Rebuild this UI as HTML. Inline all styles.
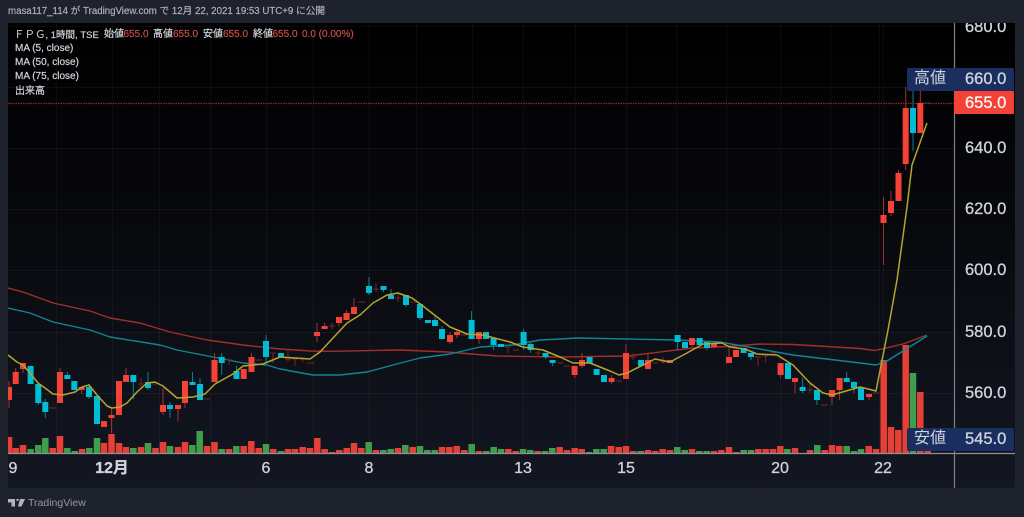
<!DOCTYPE html>
<html lang="ja"><head><meta charset="utf-8"><title>FPG</title>
<style>
html,body{margin:0;padding:0;width:1024px;height:517px;overflow:hidden;background:#1e222d}
#w{position:relative;width:1024px;height:517px;filter:blur(.3px);font-family:"Liberation Sans","Noto Sans CJK JP",sans-serif}
#h{position:absolute;left:8px;top:5px;font-size:9.7px;line-height:14px;color:#b2b5be;white-space:nowrap;-webkit-text-stroke:.15px #b2b5be}
#c{position:absolute;left:8px;top:23px;width:1007px;height:465px;overflow:hidden;background:linear-gradient(180deg,#000 0%,#07080c 40%,#131722 100%)}
#s{position:absolute;left:0;top:0}
.l,.r,.p,.x,.t{position:absolute;white-space:nowrap}
.l{font-size:10px;line-height:14px;color:#d1d4dc;-webkit-text-stroke:.2px #d1d4dc}
.r{font-size:10px;line-height:14px;color:#d0504c;-webkit-text-stroke:.15px #d0504c}
.p{font-size:16.5px;line-height:20px;color:#d1d4dc;left:957px;width:41px;text-align:right;-webkit-text-stroke:.3px #d1d4dc}
.x{font-size:16px;line-height:20px;color:#d1d4dc;transform:translateX(-50%);top:436px;-webkit-text-stroke:.3px #d1d4dc}
.t{font-size:16px;line-height:20px;color:#d1d4dc;left:906px}
.b{position:absolute;background:#1a2f60;border-radius:2px}
</style></head><body><div id="w">
<div id="h">masa117_114 が TradingView.com で 12月 22, 2021 19:53 UTC+9 に公開</div>
<div id="c">
<svg id="s" width="1024" height="517" viewBox="8 23 1024 517" fill="none">
<g stroke="#fff" stroke-opacity=".045" stroke-width="1"><path d="M8 26.500H954M8 87.500H954M8 148.500H954M8 209.500H954M8 270.500H954M8 332.500H954M8 393.500H954"/>
<path d="M56.500 23V454M112.500 23V454M159.500 23V454M210.500 23V454M266.500 23V454M313.500 23V454M369.500 23V454M416.500 23V454M472.500 23V454M523.500 23V454M575.500 23V454M626.500 23V454M676.500 23V454M726.500 23V454M780.500 23V454M830.500 23V454M879.500 23V454M883.500 23V454"/></g>
<path d="M8 103.500H954" stroke="#8f2826" stroke-width="1.200" stroke-dasharray="1.500 1"/>
<!-- volume -->
<path stroke="#e53f36" stroke-width="6.500" d="M9 437V453M15.700 448V453M23 445V453M52.700 448V453M60 436V453M82 449V453M104 443V453M111.500 434V453M119 443V453M126 447V453M141 447V453M155.500 448V453M163 442V453M178 447V453M185 442V453M207 446V453M214.500 442V453M229 449V453M243.700 446V453M251.300 441V453M258.700 448V453M273.300 449V453M288 449V453M295 449V453M302.700 447V453M310 448V453M317.300 438V453M324.700 449V453M332 452V453M339.300 450V453M346.700 448V453M354 443V453M361.300 448V453M376 450V453M398 448V453M412.700 447V453M442 447V453M449.300 447V453M456.700 446V453M464.300 450V453M479 451V453M508.300 449V453M515.700 451V453M537.700 451V453M559.700 447V453M567 450V453M574.700 448V453M581.700 449V453M611 446V453M618.700 447V453M626 446V453M633.300 451V453M648 450V453M655.300 451V453M662.700 449V453M670 450V453M692 449V453M714 451V453M721.300 450V453M729 447V453M736.300 452V453M758.300 449V453M765.700 449V453M773 449V453M780.300 446V453M795 448V453M810 450V453M824.700 450V453M832 445V453M839.300 446V453M868.700 446V453M876 449V453M883.700 360V453M891 427V453M898.300 430V453M905.700 345V453M920.300 392V453M927.700 451V453"/>
<path stroke="#3f9e4c" stroke-width="6.500" d="M30.700 449V453M38.300 445V453M45.300 438V453M67.300 448V453M74.700 451V453M89.300 448V453M97 438V453M133.300 448V453M148 443V453M170 446V453M192.300 445V453M199.700 431V453M221.700 449V453M236.300 446V453M266 444V453M281 451V453M368.700 442V453M383.300 450V453M390.700 449V453M405.300 445V453M420 446V453M427.300 450V453M434.700 450V453M471.700 444V453M486.300 451V453M493.700 447V453M501 449V453M523 449V453M530.300 450V453M545 451V453M552.300 448V453M589 452V453M596.300 449V453M603.700 449V453M640.700 451V453M677.300 447V453M684.700 450V453M699.300 451V453M706.700 451V453M743.700 450V453M751 450V453M787.300 449V453M817.300 445V453M846.700 446V453M854 451V453M861 449V453M913 373V453"/>
<path stroke="#8f929b" stroke-width="1.200" d="M8 453.500H1016"/>
<path stroke="#7d8089" stroke-width="1.200" d="M954.500 23V488"/>
<!-- red MA -->
<path stroke="#a32f2b" stroke-width="1.400" stroke-linejoin="round" d="M8 288L23 292 53 303 90 311 110 318 140 323 170 332 207 340 243 345 280 349 310 351 330 351.300 400 350 447 352 497 356 560 357 627 356 693 348 727 346.500 760 344 793 344.500 860 348.500 875 350.500 903 344 927 335"/>
<!-- teal MA -->
<path stroke="#108594" stroke-width="1.400" stroke-linejoin="round" d="M8 308L30 313 53 322 90 330 110 337 160 345 177 350 213 357 243 363 267 365 280 369 313 375 340 375 367 372 393 365 420 358 450 354 480 347 513 345 540 340 560 339 577 338 627 339 677 340 720 342 793 355 860 363 876 365 887 361 903 351 927 336"/>
<!-- wicks -->
<path stroke="#a3312b" stroke-width="1" d="M9 381V408M15.700 368V384M23 363V373M60 368V403M81.600 387V394M111.500 407V433M119 381V415M126 368V382M163 388V415M178 408V421M185 381V408M214.500 353V382M251.500 353V372M317 323V342M324.600 323V329M339 317V326M346.500 310V320M354 298V314M450 332V344M457 329V338M479 332V344M574.600 366V378M582 353V368M611.600 375V384M626 344V379M648 353V369M692 338V347M729 347V363M780.600 363V378M795 378V393M832 390V405M839.600 378V400M869 394V400M883.500 197V265M891 191V216M898.500 170V201M905.700 87V170M920.300 90V133"/>
<path stroke="#0e7f91" stroke-width="1" d="M38.300 384V405M45.300 399V418M67.300 372V379M89 384V399M133.300 375V399M148 372V390M170 402V418M192.500 372V385M200 378V400M221.700 353V375M236.500 366V379M266 335V362M369 277V295M383.500 286V292M391 289V299M406 295V307M420 304V320M435 317V326M442 326V339M471.600 311V339M493.600 338V350M523.600 329V350M530.600 342V353M545.500 353V359M552.600 360V366M677.600 335V350M707 342V350M751 353V360M802.600 378V393M817 390V405M846.700 372V382M854 381V393M913 91V151"/>
<path stroke="#6e2826" stroke-width="1" d="M49 408h7M138 384h6M141 378V388M152 384h6M204 399h6M226 360h6M229 358V365M255 360h7M270 353h6M273 353V363M285 359h6M288 350V362M292 359h6M295 359V366M300 359h6M302.600 357V362M307 363h7M329 326h6M332 323V329M358 302h7M373 289h6M376 283V292M395 298h6M398 293V302M410 302h7M461 335h6M505 347h6M508 345V353M513 350h6M535 353h6M538 350V357M557 363h6M564 366h6M630 357h6M633 353V360M616 381h6M652 363h6M660 362h6M663 357V364M718 343h7M755 357h6M758 357V366M762 356h6M765.600 356V363M770 353h6M807 390h6M810 384V393M821 405h7M873 393h6M924 103h7"/>
<!-- bodies -->
<path stroke="#f44336" stroke-width="6" d="M9 387V400M15.700 372V384M23 363V369M60 372V403M81.600 387V390M104 421V427M111.500 415V418M119 381V415M126 375V382M163 405V412M178 405V409M185 381V403M214.500 360V382M243.700 369V379M251.500 357V372M317 332V336M324.600 326V329M339 317V323M346.500 313V320M354 307V314M450 335V342M457 332V335M479 332V339M574.600 366V375M582 360V366M611.600 378V382M626 353V379M648 360V369M670 360V363M692 338V345M714 344V347M729 357V363M736 350V357M780.600 363V375M795 378V382M832 390V397M839.600 378V390M869 394V397M883.500 215V223M891 201V213M898.500 173V201M905.700 108V164M920.300 103V133"/>
<path stroke="#00bcd4" stroke-width="6" d="M30.600 366V384M38.300 384V403M45.300 402V412M67.300 375V379M74.300 381V390M89 387V397M97 396V424M133.300 375V382M148 382V388M170 405V409M192.500 382V385M200 384V400M221.700 357V363M236.500 371V379M266 341V357M281 353V357M369 286V293M383.500 286V290M391 295V299M406 295V305M420 304V318M428 320V323M435 320V326M442 329V339M471.600 320V339M486 332V339M493.600 338V345M501 344V347M523.600 332V345M530.600 344V350M545.500 353V357M552.600 360V363M589.600 357V363M596.600 369V375M604 375V382M641 360V366M677.600 335V342M685 342V348M699.600 338V345M707 342V348M743.600 348V353M751 353V357M788 363V379M802.600 387V391M817 390V400M846.700 378V382M854 382V388M861 388V400M913 108V133"/>
<!-- yellow MA -->
<path stroke="#b5a52c" stroke-width="1.500" stroke-linejoin="round" d="M8 355L17 362 23 365 30 373 38 383 45 388 53 394 63 395 75 392 82 387 89 385 97 395 107 406 112 408 120 407 127 403 137 392 147 383 155 382 163 386 177 398 193 397 205 394 215 384 233 374 243 366 263 364 280 357 310 359 320 352 333 338 347 323 360 315 373 303 387 295 398 293 412 298 423 306 437 317 450 327 467 334 483 335 510 342 523 347 543 350 560 357 573 363 590 363 610 371 619 375 627 373 655 359 670 362 687 353 703 344 722 343 730 347 745 349 757 354 777 355 793 365 810 383 823 393 832 395 860 387 876 391 888 330 897 280 907 207 912 165 927 123"/>
</svg>
<div class="p" style="top:-6px">680.0</div>
<div class="p" style="top:115px">640.0</div>
<div class="p" style="top:176px">620.0</div>
<div class="p" style="top:237px">600.0</div>
<div class="p" style="top:299px">580.0</div>
<div class="p" style="top:360px">560.0</div>
<div class="b" style="left:899px;top:45px;width:107px;height:23px"></div>
<div class="t" style="top:46px">高値</div><div class="p" style="top:46px">660.0</div>
<div style="position:absolute;left:946px;top:68px;width:60px;height:23px;background:#f44336"></div>
<div class="p" style="top:70px;color:#f5f5f5;-webkit-text-stroke:.3px #f5f5f5">655.0</div>
<div class="b" style="left:899px;top:405px;width:107px;height:23px"></div>
<div class="t" style="top:406px">安値</div><div class="p" style="top:406px">545.0</div>
<div class="x" style="left:5px">9</div>
<div class="x" style="left:104px;font-weight:bold">12月</div>
<div class="x" style="left:258px">6</div>
<div class="x" style="left:361px">8</div>
<div class="x" style="left:515px">13</div>
<div class="x" style="left:618px">15</div>
<div class="x" style="left:772px">20</div>
<div class="x" style="left:875px">22</div>
<div class="l" style="left:6px;top:5px;font-size:9.500px"><span style="font-size:10.500px;-webkit-text-stroke:0">&#xFF26;&#xFF30;&#xFF27;</span>, 1時間, TSE</div>
<div class="l" style="left:96px;top:5px">始値</div><div class="r" style="left:115.500px;top:5px">655.0</div>
<div class="l" style="left:145px;top:5px">高値</div><div class="r" style="left:165px;top:5px">655.0</div>
<div class="l" style="left:195px;top:5px">安値</div><div class="r" style="left:215px;top:5px">655.0</div>
<div class="l" style="left:245px;top:5px">終値</div><div class="r" style="left:264.500px;top:5px">655.0</div>
<div class="r" style="left:294px;top:5px">0.0 (0.00%)</div>
<div class="l" style="left:7px;top:19px">MA (5, close)</div>
<div class="l" style="left:7px;top:33px">MA (50, close)</div>
<div class="l" style="left:7px;top:47px">MA (75, close)</div>
<div class="l" style="left:7px;top:62px">出来高</div>
</div>
<svg style="position:absolute;left:8px;top:498px" width="18" height="10" viewBox="0 0 18 10"><path fill="#b2b5be" d="M0 1H7V8.500H3.500V4.500H0ZM8.500 1H11L10 3H8.500ZM12 1H17L13.500 8.500H10Z"/></svg>
<div style="position:absolute;left:28px;top:496px;font-size:10.500px;line-height:14px;color:#9598a1;white-space:nowrap">TradingView</div>
</div></body></html>
